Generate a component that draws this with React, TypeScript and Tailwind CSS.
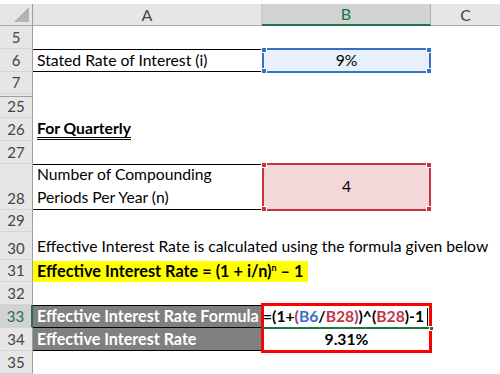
import React from "react";

type RowProps = {
  label: string;
  h: string;
  active?: boolean;
  a?: React.ReactNode;
  b?: React.ReactNode;
  aClass?: string;
  bClass?: string;
};

function Row({ label, h, active, a, b, aClass = "", bClass = "" }: RowProps) {
  return (
    <div className={`flex ${h}`}>
      <div
        className={`w-[33px] shrink-0 flex items-end justify-center pb-[1px] text-[15px] leading-[20px] border-b border-b-[#d4d4d4] ${
          active
            ? "bg-[#d2d2d2] text-[#217346] border-r-2 border-r-[#217346]"
            : "bg-[#e6e6e6] text-[#444] border-r border-r-[#9e9e9e]"
        }`}
      >
        {label}
      </div>
      <div className={`w-[229px] shrink-0 relative ${aClass}`}>{a}</div>
      <div className={`w-[169px] shrink-0 relative ${bClass}`}>{b}</div>
      <div className="flex-1" />
    </div>
  );
}

// little squares on the corners of a reference box
function Handles({ fill }: { fill: string }) {
  const sq = `absolute w-[6px] h-[6px] border border-white ${fill}`;
  return (
    <>
      <span className={`${sq} -left-[3px] -top-[3px]`} />
      <span className={`${sq} -right-[3px] -top-[3px]`} />
      <span className={`${sq} -left-[3px] -bottom-[3px]`} />
      <span className={`${sq} -right-[3px] -bottom-[3px]`} />
    </>
  );
}

export default function App() {
  return (
    <div className="w-[500px] h-[374px] overflow-hidden bg-white font-['Lato','Liberation_Sans',sans-serif] text-[15.7px] text-black">
      {/* Column headers */}
      <div className="h-[4px] bg-white" />
      <div className="flex h-[22px] text-[16px] leading-[20px]">
        <div className="w-[33px] shrink-0 relative bg-[#e6e6e6] border-r border-r-[#9e9e9e] border-b border-b-[#ababab]">
          <svg className="absolute right-[3px] bottom-[3px]" width="15" height="15" viewBox="0 0 15 15">
            <polygon points="15,0 15,15 0,15" fill="#b4b4b4" />
          </svg>
        </div>
        <div className="w-[229px] shrink-0 flex items-center justify-center bg-[#e6e6e6] text-[#444] border-b border-b-[#ababab] border-r border-r-[#c8c8c8]">
          A
        </div>
        <div className="w-[169px] shrink-0 flex items-center justify-center bg-[#d2d2d2] text-[#217346] border-b-2 border-b-[#217346] border-r border-r-[#ababab]">
          B
        </div>
        <div className="flex-1 flex items-center justify-center bg-[#e6e6e6] text-[#444] border-b border-b-[#ababab]">
          C
        </div>
      </div>

      <Row label="5" h="h-[23px]" />
      <Row
        label="6"
        h="h-[23px]"
        aClass="border-t border-b border-black flex items-center pl-[4px]"
        a={<span className="whitespace-nowrap">Stated Rate of Interest (i)</span>}
        b={
          <div className="absolute -top-px left-0 right-0 -bottom-px border-2 border-[#3570c8] bg-[#e8f0fa] flex items-center justify-center">
            9%
            <Handles fill="bg-[#3570c8]" />
          </div>
        }
      />
      <Row label="7" h="h-[22px]" />
      {/* hidden rows marker */}
      <div className="flex h-[3px]">
        <div className="w-[33px] shrink-0 bg-[#e6e6e6] border-r border-r-[#9e9e9e] border-b border-b-[#9e9e9e]" />
      </div>
      <Row label="25" h="h-[21px]" />
      <Row
        label="26"
        h="h-[23px]"
        aClass="flex items-end pl-[4px] pb-[1px]"
        a={
          <span className="font-bold whitespace-nowrap leading-[18px] border-b-[3px] border-double border-black">
            For Quarterly
          </span>
        }
      />
      <Row label="27" h="h-[23px]" />
      <Row
        label="28"
        h="h-[46px]"
        aClass="border-t border-b border-black flex flex-col justify-end pl-[4px] leading-[23px]"
        a={
          <>
            <span className="whitespace-nowrap">Number of Compounding</span>
            <span className="whitespace-nowrap">Periods Per Year (n)</span>
          </>
        }
        b={
          <div className="absolute -top-px left-0 right-0 -bottom-px border-2 border-[#c3343f] bg-[#f4d7d9] flex items-center justify-center">
            4
            <Handles fill="bg-[#c3343f]" />
          </div>
        }
      />
      <Row label="29" h="h-[22px]" />
      <Row
        label="30"
        h="h-[28px]"
        aClass="flex items-end pl-[4px] pb-[1px]"
        a={
          <span className="whitespace-nowrap">
            Effective Interest Rate is calculated using the formula given below
          </span>
        }
      />
      <Row
        label="31"
        h="h-[22px]"
        aClass="flex items-stretch pt-px"
        a={
          <span className="w-[275px] shrink-0 bg-[#ffff00] font-bold text-[16.3px] whitespace-nowrap pl-[4px] flex items-center">
            Effective Interest Rate = (1 + i/n)
            <span className="text-[9px] leading-none self-start mt-[2px]">n</span>
            &nbsp;– 1
          </span>
        }
      />
      <Row label="32" h="h-[23px]" />
      <Row
        label="33"
        h="h-[23px]"
        active
        aClass="bg-[#808080] border-t border-b border-black flex items-center pl-[4px] overflow-hidden"
        a={
          <span className="font-bold text-[16.1px] text-white whitespace-nowrap">
            Effective Interest Rate Formula
          </span>
        }
        b={
          <>
            <div className="absolute inset-0 flex items-center pl-[1px] font-bold whitespace-nowrap">
              <span>=(1+</span>
              <span className="text-[#a0376a]">(</span>
              <span className="text-[#3570c8]">B6</span>
              <span>/</span>
              <span className="text-[#c3343f]">B28</span>
              <span className="text-[#a0376a]">)</span>
              <span>)^(</span>
              <span className="text-[#c3343f]">B28</span>
              <span>)-1</span>
              <span className="ml-[3px] w-px h-[18px] bg-black" />
            </div>
            <div className="absolute left-0 -right-px -bottom-px h-[2px] bg-[#217346] z-20" />
            <div className="absolute -right-[3px] -bottom-[3px] w-[5px] h-[5px] bg-[#217346] border border-white z-20" />
            <div className="absolute -top-[2px] -left-px w-[171px] h-[50px] border-[3px] border-[#ff0000] z-10" />
          </>
        }
      />
      <Row
        label="34"
        h="h-[23px]"
        aClass="bg-[#808080] border-b border-black flex items-center pl-[4px]"
        a={
          <span className="font-bold text-[16.1px] text-white whitespace-nowrap">
            Effective Interest Rate
          </span>
        }
        bClass="flex items-center justify-center font-bold"
        b="9.31%"
      />
      <Row label="35" h="h-[23px]" />
    </div>
  );
}
